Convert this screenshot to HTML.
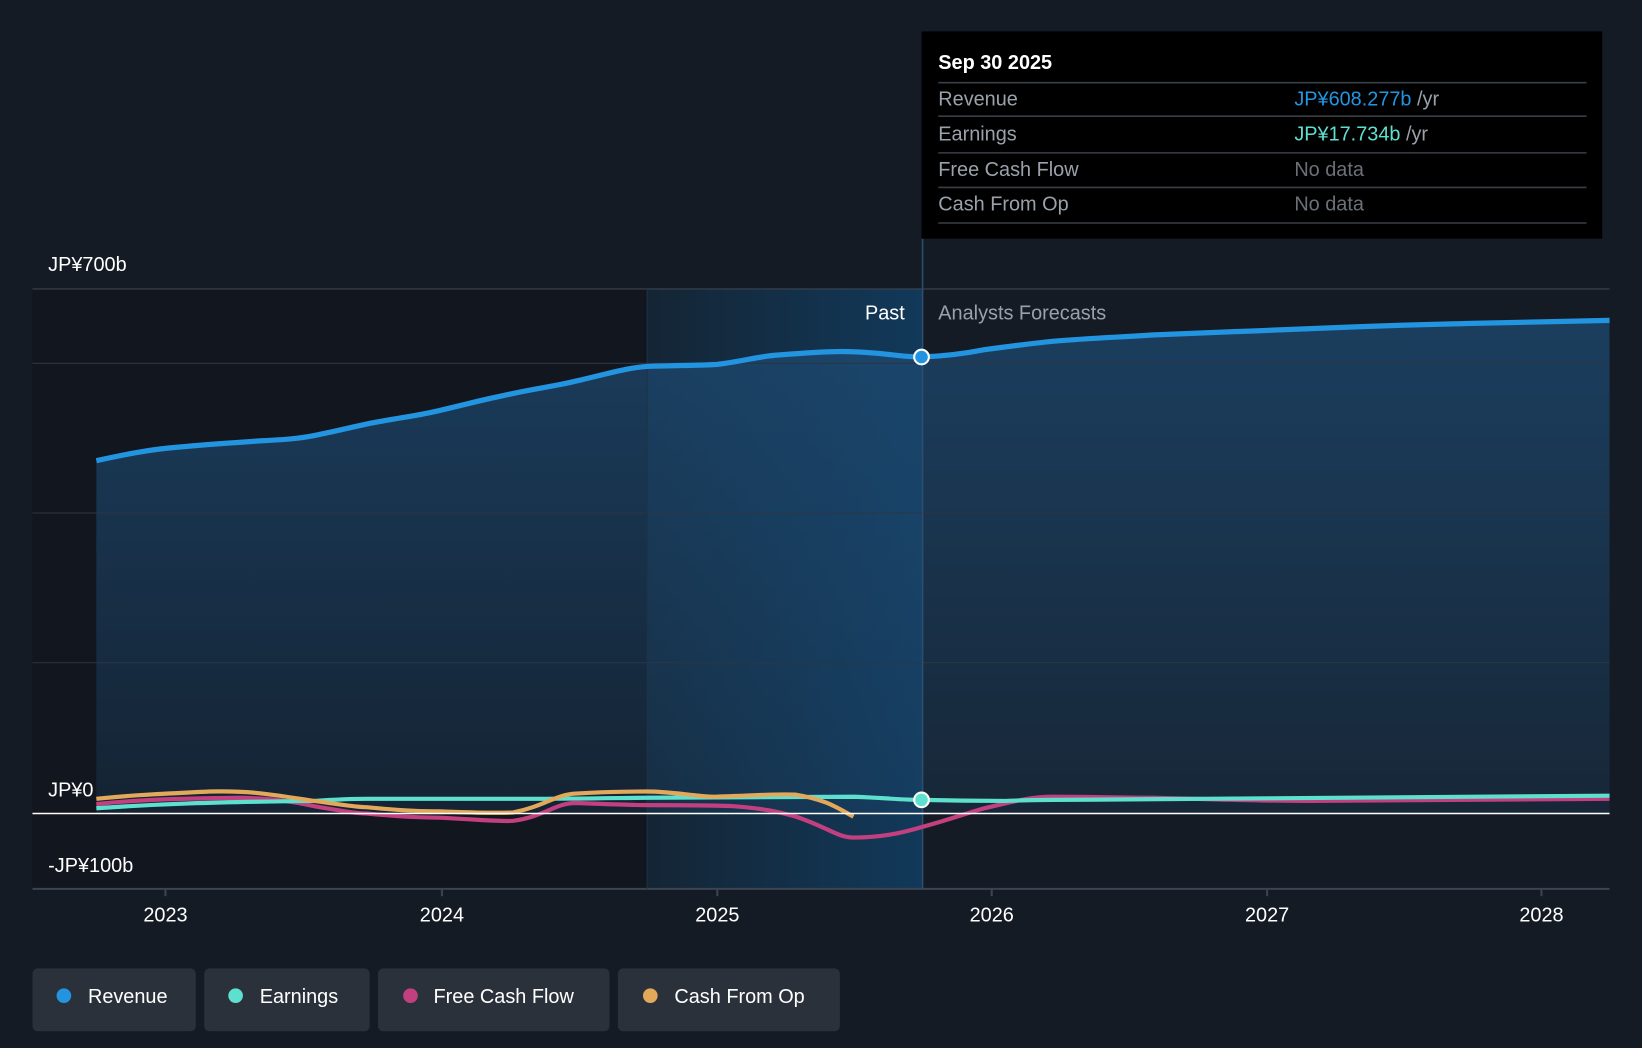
<!DOCTYPE html>
<html><head><meta charset="utf-8"><style>
html,body{margin:0;padding:0;background:#151b24;width:1642px;height:1048px;overflow:hidden}
svg{display:block;font-family:"Liberation Sans",Arial,sans-serif}
</style></head><body>
<svg width="1642" height="1048" viewBox="0 0 1568 1001" preserveAspectRatio="none">
<defs>
<linearGradient id="rev" x1="0" y1="0" x2="0" y2="1">
<stop offset="0" stop-color="#1d4a72" stop-opacity="0.75"/>
<stop offset="1" stop-color="#1d4a72" stop-opacity="0.25"/>
</linearGradient>
<linearGradient id="hl" x1="0" y1="0" x2="1" y2="0">
<stop offset="0" stop-color="#142535"/>
<stop offset="1" stop-color="#12395a"/>
</linearGradient>
</defs>
<rect width="1568" height="1001" fill="#151b24"/>
<rect x="31" y="276" width="587" height="573" fill="#12161e"/>
<rect x="618" y="276" width="263" height="573" fill="url(#hl)"/>
<path d="M92,440 C120,434 140,430 160,428 C190,425 220,423 250,421 C270,420 285,419 300,416 C330,410 340,407 350,405 C380,399 400,397 420,392 C450,385 460,382 480,378 C510,371 530,369 550,364 C580,357 600,351 618,350 C650,349 670,349 685,348 C710,345 725,340 745,339 C780,336 800,335 815,336 C845,337 860,341 880,341 C905,340 925,337 940,334 C970,330 985,328 1005,326 C1040,323 1070,322 1100,320 C1150,318 1170,317 1200,316 C1250,314 1270,313 1300,312 C1350,310 1370,310 1400,309 C1460,308 1500,307 1537,306 L1537,777 L92,777 Z" fill="url(#rev)"/>
<g stroke="#2b3645" stroke-width="1">
<line x1="31" y1="347" x2="1537" y2="347"/>
<line x1="31" y1="490" x2="1537" y2="490"/>
<line x1="31" y1="633" x2="1537" y2="633"/>
</g>
<line x1="31" y1="276" x2="1537" y2="276" stroke="#3a4452" stroke-width="1"/>
<line x1="31" y1="849" x2="1537" y2="849" stroke="#3a4452" stroke-width="2"/>
<g stroke="#3a4452" stroke-width="2">
<line x1="158" y1="849" x2="158" y2="856"/><line x1="422" y1="849" x2="422" y2="856"/><line x1="685" y1="849" x2="685" y2="856"/><line x1="947" y1="849" x2="947" y2="856"/><line x1="1210" y1="849" x2="1210" y2="856"/><line x1="1472" y1="849" x2="1472" y2="856"/>
</g>
<line x1="881" y1="228" x2="881" y2="849" stroke="#2a4f70" stroke-width="1.5"/>
<line x1="618" y1="276" x2="618" y2="849" stroke="#1e3345" stroke-width="1"/>
<path d="M92,768 C130,764 160,763 230,762 C270,763 290,768 300,770 C330,775 340,777 350,777 C380,780 400,781 420,781 C460,783 480,785 490,784 C520,780 530,767 550,767 C580,768 600,769 618,769 C660,769 680,769 700,770 C730,772 745,776 760,780 C790,790 800,800 815,800 C840,800 860,796 880,790 C910,782 925,776 940,772 C970,765 985,761 1005,761 C1050,761 1070,762 1100,762 C1180,764 1200,765 1250,765 C1400,764 1480,763 1537,763" fill="none" stroke="#c2407f" stroke-width="4"/>
<path d="M92,772 C150,768 200,766 300,765 C330,763 340,763 350,763 L500,763 C560,763 600,762 618,762 L815,761 C845,762 860,764 880,764 C920,765 940,765 960,765 C990,764 1000,764 1005,764 C1200,763 1400,761 1537,760" fill="none" stroke="#5ee0cf" stroke-width="4"/>
<path d="M92,763 C130,759 160,758 200,756 C240,755 260,759 300,765 C330,769 340,771 350,771 C380,774 400,775 420,775 C450,776 470,777 490,776 C520,770 530,759 550,758 C580,756 600,756 618,756 C640,756 660,760 680,761 C720,760 740,758 760,759 C790,764 800,772 815,780" fill="none" stroke="#e3a95a" stroke-width="4"/>
<line x1="31" y1="777" x2="1537" y2="777" stroke="#ffffff" stroke-width="1.5"/>
<path d="M92,440 C120,434 140,430 160,428 C190,425 220,423 250,421 C270,420 285,419 300,416 C330,410 340,407 350,405 C380,399 400,397 420,392 C450,385 460,382 480,378 C510,371 530,369 550,364 C580,357 600,351 618,350 C650,349 670,349 685,348 C710,345 725,340 745,339 C780,336 800,335 815,336 C845,337 860,341 880,341 C905,340 925,337 940,334 C970,330 985,328 1005,326 C1040,323 1070,322 1100,320 C1150,318 1170,317 1200,316 C1250,314 1270,313 1300,312 C1350,310 1370,310 1400,309 C1460,308 1500,307 1537,306" fill="none" stroke="#2394e0" stroke-width="5"/>
<circle cx="880" cy="341" r="7" fill="#2394e0" stroke="#fff" stroke-width="2"/>
<circle cx="880" cy="764" r="7" fill="#5ee0cf" stroke="#fff" stroke-width="2"/>
<g font-size="19" fill="#ffffff">
<text x="46" y="259">JP¥700b</text>
<text x="46" y="761">JP¥0</text>
<text x="46" y="833">-JP¥100b</text>
<text x="864" y="305" text-anchor="end">Past</text>
<text x="896" y="305" fill="#9aa1aa">Analysts Forecasts</text>
<g text-anchor="middle"><text x="158" y="880">2023</text><text x="422" y="880">2024</text><text x="685" y="880">2025</text><text x="947" y="880">2026</text><text x="1210" y="880">2027</text><text x="1472" y="880">2028</text></g>
</g>
<rect x="880" y="30" width="650" height="198" fill="#000"/>
<g font-size="19">
<text x="896" y="66" fill="#fff" font-weight="bold">Sep 30 2025</text>
<g stroke="#3a3f46" stroke-width="1.5"><line x1="896" y1="79" x2="1515" y2="79"/><line x1="896" y1="111" x2="1515" y2="111"/><line x1="896" y1="146" x2="1515" y2="146"/><line x1="896" y1="179" x2="1515" y2="179"/><line x1="896" y1="213" x2="1515" y2="213"/></g>
<text x="896" y="101" fill="#9aa1aa">Revenue</text>
<text x="896" y="134" fill="#9aa1aa">Earnings</text>
<text x="896" y="168" fill="#9aa1aa">Free Cash Flow</text>
<text x="896" y="201" fill="#9aa1aa">Cash From Op</text>
<text x="1236" y="101" fill="#2394e0">JP¥608.277b <tspan fill="#9aa1aa">/yr</tspan></text>
<text x="1236" y="134" fill="#5ee0cf">JP¥17.734b <tspan fill="#9aa1aa">/yr</tspan></text>
<text x="1236" y="168" fill="#6b7078">No data</text>
<text x="1236" y="201" fill="#6b7078">No data</text>
</g>
<g font-size="19" fill="#fff">
<rect x="31" y="925" width="156" height="60" rx="5" fill="#2b313b"/>
<circle cx="61" cy="951" r="7" fill="#2394e0"/><text x="84" y="958">Revenue</text>
<rect x="195" y="925" width="158" height="60" rx="5" fill="#2b313b"/>
<circle cx="225" cy="951" r="7" fill="#5ee0cf"/><text x="248" y="958">Earnings</text>
<rect x="361" y="925" width="221" height="60" rx="5" fill="#2b313b"/>
<circle cx="392" cy="951" r="7" fill="#c2407f"/><text x="414" y="958">Free Cash Flow</text>
<rect x="590" y="925" width="212" height="60" rx="5" fill="#2b313b"/>
<circle cx="621" cy="951" r="7" fill="#e3a95a"/><text x="644" y="958">Cash From Op</text>
</g>
</svg>
</body></html>
